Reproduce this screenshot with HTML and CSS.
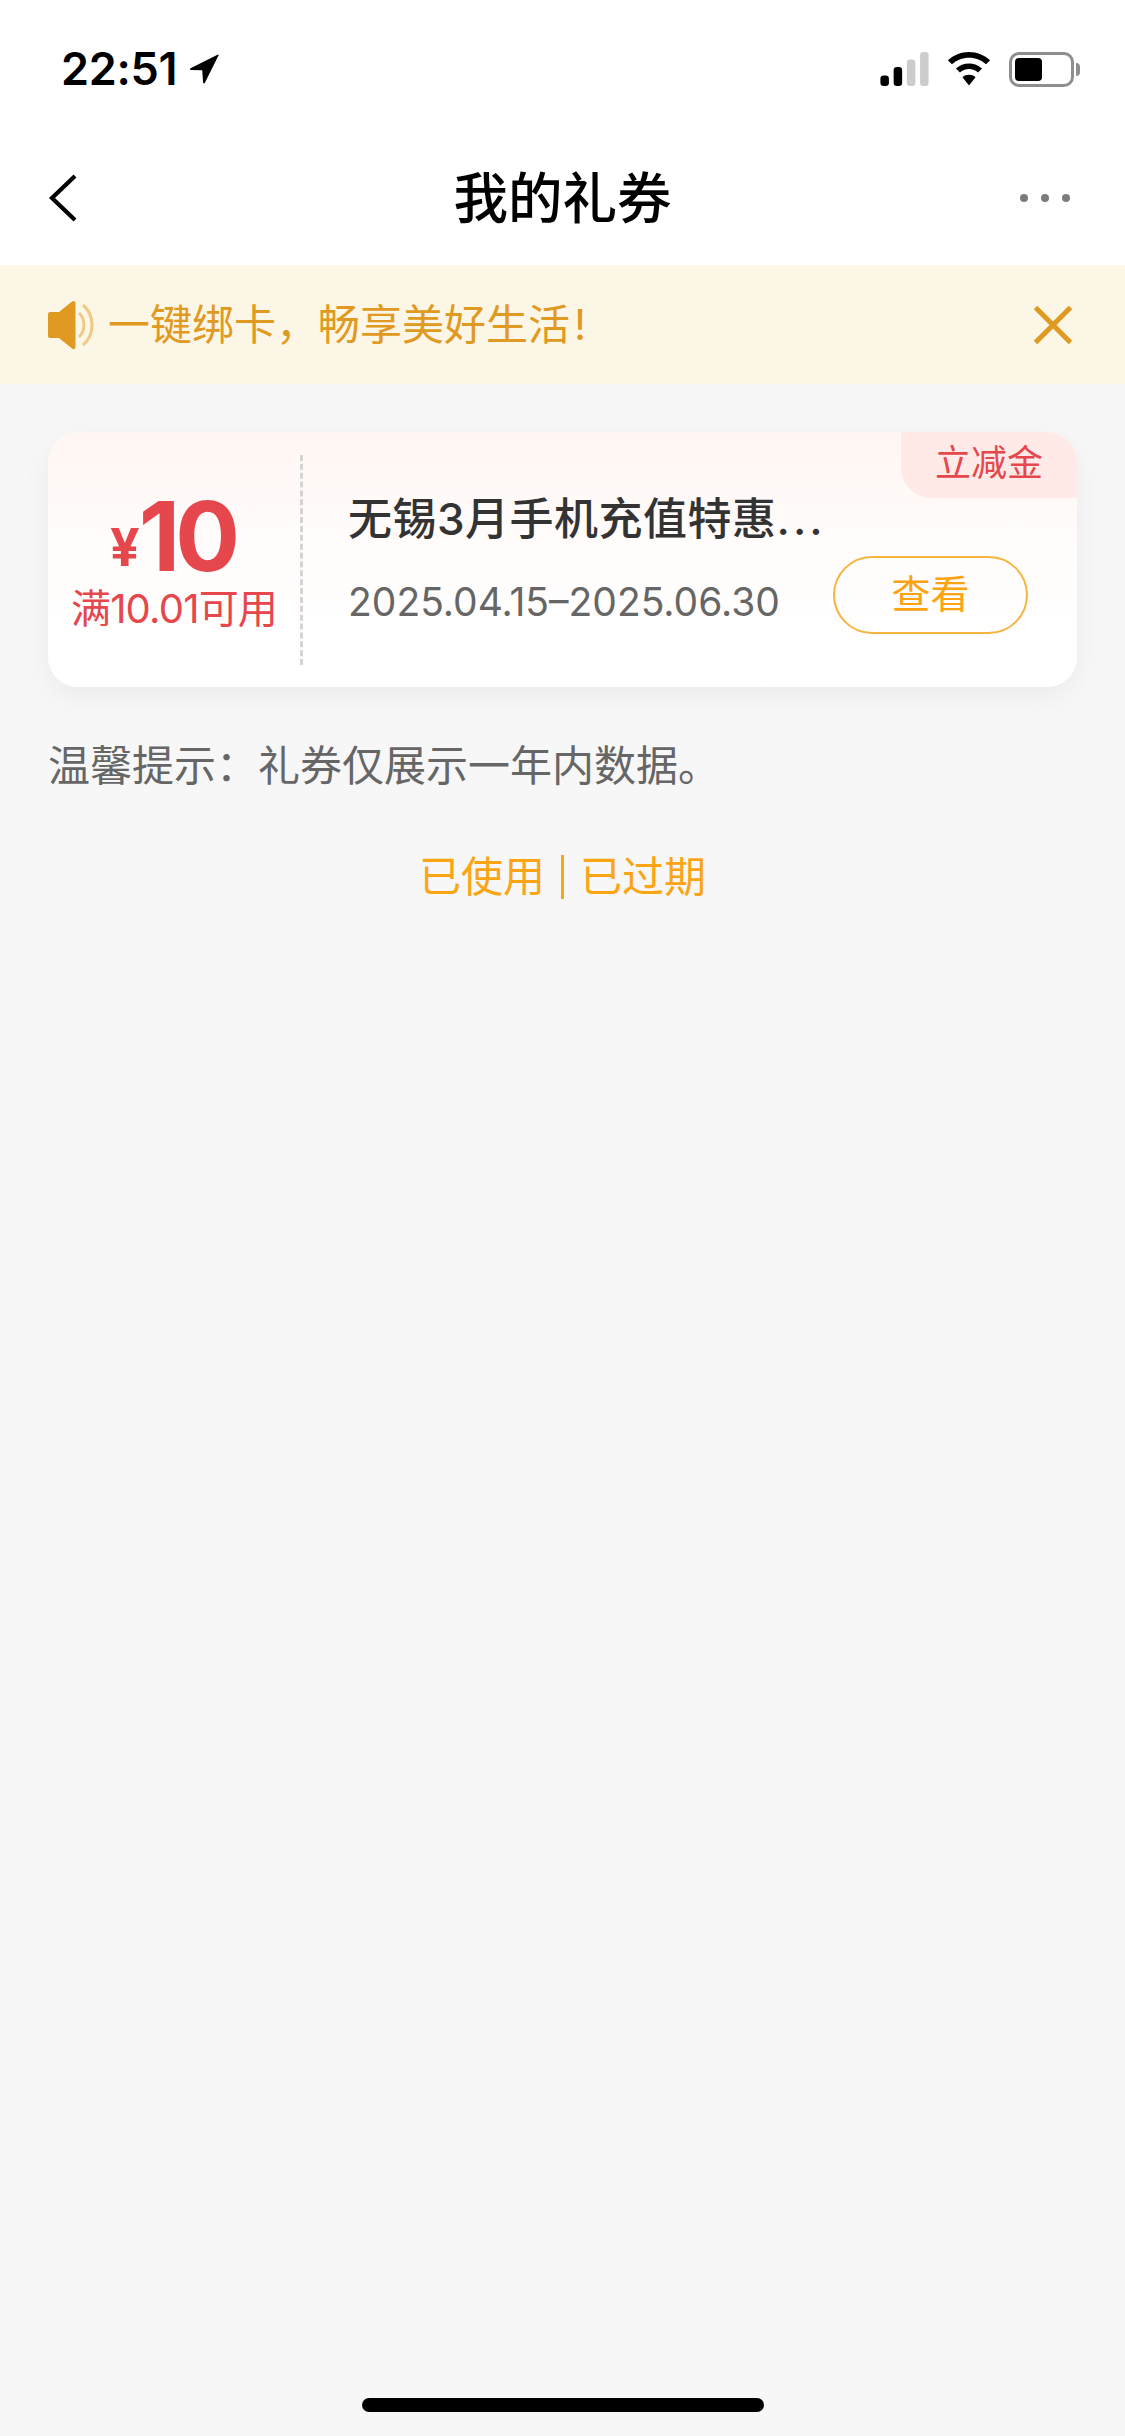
FILE: index.html
```html
<!DOCTYPE html>
<html lang="zh-CN">
<head>
<meta charset="utf-8">
<title>我的礼券</title>
<link rel="stylesheet" href="styles.css">
</head>
<body>
<div class="page">
  <header class="top">
    <div class="status">
      <div class="time-group">
        <span class="time">22:51</span>
        <svg class="loc" viewBox="0 0 30 32"><path d="M29 1.500 1.500 15.200c-.9.500-.6 1.700.4 1.700l11.300.4.900 12.200c.1 1 1.400 1.200 1.800.3L29.600 2.300c.2-.6-.1-1-.6-.8Z" fill="#000"/></svg>
      </div>
      <div class="status-icons">
        <svg class="signal" viewBox="0 0 51 36">
          <rect x="0" y="25" width="9" height="11" rx="3.500" fill="#000"/>
          <rect x="14" y="16" width="9" height="20" rx="3.500" fill="#000"/>
          <rect x="28" y="8" width="9" height="28" rx="3.500" fill="#ccc"/>
          <rect x="42" y="0" width="9" height="36" rx="3.500" fill="#ccc"/>
        </svg>
        <svg class="wifi" viewBox="0 0 46 36">
          <path d="M23 0C14.400 0 6.600 3.300.7 8.800L4.900 13C9.700 8.600 16 6 23 6s13.300 2.600 18.100 7l4.200-4.200C39.400 3.300 31.600 0 23 0Z" fill="#000"/>
          <path d="M23 12.200c-5.300 0-10.100 2-13.800 5.300l4.200 4.200c2.600-2.200 5.900-3.600 9.600-3.600s7 1.400 9.600 3.600l4.200-4.200C33.100 14.200 28.300 12.200 23 12.200Z" fill="#000"/>
          <path d="M23 24.200c-2.600 0-5 .9-6.900 2.500L23 35.500l6.900-8.800c-1.900-1.600-4.300-2.500-6.900-2.500Z" fill="#000"/>
        </svg>
        <div class="battery">
          <div class="battery-body"><div class="battery-fill"></div></div>
          <div class="battery-cap"></div>
        </div>
      </div>
    </div>
    <nav class="nav">
      <svg class="back" viewBox="0 0 30 50"><path d="M27 3 4 25l23 22" fill="none" stroke="#000" stroke-width="4.200"/></svg>
      <h1 class="title">我的礼券</h1>
      <div class="more"><i></i><i></i><i></i></div>
    </nav>
  </header>

  <div class="notice">
    <div class="notice-left">
      <svg class="speaker" viewBox="0 0 48 50">
        <path d="M0 14c0-1 .8-2 2-2h9L24 1.500c1.500-1.300 3.500-.4 3.500 1.500v44c0 2-2 2.800-3.500 1.500L11 38H2c-1.200 0-2-1-2-2Z" fill="#e09a22"/>
        <path d="M31 13c6.500 6 6.500 18 0 24" fill="none" stroke="#efca86" stroke-width="3"/>
        <path d="M35 5c12 10 12 30 0 40" fill="none" stroke="#efca86" stroke-width="3"/>
      </svg>
      <span class="notice-text">一键绑卡，畅享美好生活<span class="bang">!</span></span>
    </div>
    <svg class="close" viewBox="0 0 38 38"><path d="M1.500 1.500l35 35M36.500 1.500l-35 35" fill="none" stroke="#e09a22" stroke-width="5"/></svg>
  </div>

  <main class="content">
    <section class="card">
      <span class="tag">立减金</span>
      <div class="amount">
        <div class="price"><span class="yen">¥</span><span class="num">10</span></div>
        <div class="cond">满10.01可用</div>
      </div>
      <div class="info">
        <h2 class="name">无锡3月手机充值特惠<span class="dots">...</span></h2>
        <div class="date-row">
          <span class="date">2025.04.15–2025.06.30</span>
          <span class="btn">查看</span>
        </div>
      </div>
    </section>
    <p class="tip">温馨提示：礼券仅展示一年内数据。</p>
    <div class="links"><span>已使用</span><i class="sep"></i><span>已过期</span></div>
  </main>

  <div class="home-wrap"><div class="home"></div></div>
</div>
</body>
</html>
```
FILE: styles.css
```css
* { box-sizing: border-box; }
html, body { margin: 0; padding: 0; }
body {
  width: 1125px;
  height: 2436px;
  background: #f7f7f7;
  font-family: Inter, "Noto Sans CJK SC", sans-serif;
  overflow: hidden;
}
.page { height: 2436px; display: flex; flex-direction: column; }
.top { background: #fff; height: 265px; display: flex; flex-direction: column; }
.status {
  height: 137px;
  padding: 1px 45px 0 61px;
  display: flex;
  justify-content: space-between;
  align-items: center;
}
.time-group { display: flex; align-items: center; gap: 12px; }
.time { font-size: 45px; font-weight: 600; color: #000; line-height: 56px; letter-spacing: -0.3px; }
.loc { width: 30px; height: 32px; }
.status-icons { display: flex; align-items: center; gap: 15px; }
.signal { width: 53px; height: 34px; }
.wifi { width: 46px; height: 34px; margin-right: 2px; }
.battery { display: flex; align-items: center; gap: 2px; }
.battery-body {
  width: 65px;
  height: 35px;
  border: 3px solid #8e8e8e;
  border-radius: 10px;
  padding: 3px;
  background: #fff;
}
.battery-fill { width: 27px; height: 100%; background: #000; border-radius: 4px; }
.battery-cap { width: 4px; height: 13px; background: #8e8e8e; border-radius: 0 4px 4px 0; }
.nav {
  height: 128px;
  padding: 0 55px 6px 48px;
  display: flex;
  align-items: center;
  justify-content: space-between;
  position: relative;
  margin-bottom: -2px;
}
.back { width: 30px; height: 50px; }
.title {
  margin: 0;
  font-size: 54.5px;
  font-weight: 500;
  color: #000;
  line-height: 64px;
  position: absolute;
  left: 0;
  right: 0;
  text-align: center;
}
.more { display: flex; gap: 13px; }
.more i { width: 8px; height: 8px; border-radius: 50%; background: #7c7c7c; display: block; }
.notice {
  height: 119px;
  background: #fcf6e6;
  display: flex;
  align-items: center;
  justify-content: space-between;
  padding: 0 53px 0 48px;
}
.notice-left { display: flex; align-items: center; gap: 12px; }
.speaker { width: 48px; height: 50px; }
.notice-text { font-size: 42px; color: #e09a22; line-height: 50px; }
.bang { margin-left: 4px; }
.close { width: 38px; height: 38px; }
.content { padding: 48px 48px 0; flex: 1; }
.card {
  position: relative;
  height: 255px;
  border-radius: 30px;
  background: linear-gradient(180deg, #fff6f3 0%, #fffdfc 50%, #fff 100%);
  box-shadow: 0 10px 30px rgba(0, 0, 0, 0.05);
  display: flex;
  align-items: center;
}
.tag {
  position: absolute;
  top: 0;
  right: 0;
  width: 176px;
  height: 66px;
  background: #ffeae8;
  border-radius: 0 30px 0 30px;
  color: #e5474d;
  font-size: 36px;
  line-height: 62px;
  text-align: center;
}
.amount {
  width: 255px;
  height: 210px;
  padding-top: 36px;
  border-right: 3px dashed #d4d4d4;
  text-align: center;
  flex: none;
}
.price { color: #e5474d; line-height: 90px; height: 90px; font-weight: 700; padding-right: 3px; }
.yen { font-size: 52px; position: relative; top: -5px; margin-right: -1px; }
.num { font-size: 96px; letter-spacing: -5px; }
.cond { color: #e5474d; font-size: 40px; line-height: 46px; letter-spacing: -0.8px; margin-top: 5px; white-space: nowrap; }
.info { flex: 1; padding-left: 45px; padding-right: 49px; }
.name { margin: 0; font-size: 44px; font-weight: 500; color: #333; line-height: 56px; letter-spacing: 0.5px; white-space: nowrap; }
.dots { letter-spacing: 3px; }
.date-row { display: flex; align-items: center; justify-content: space-between; margin-top: 9px; margin-bottom: -6px; }
.date { font-size: 39px; color: #666; margin-top: 12px; white-space: nowrap; }
.btn {
  width: 195px;
  height: 78px;
  border: 2px solid #f6b53f;
  border-radius: 39px;
  color: #fca311;
  font-size: 39px;
  line-height: 72px;
  text-align: center;
  flex: none;
}
.tip { margin: 51px 0 0; font-size: 42px; line-height: 56px; color: #666; }
.links {
  margin-top: 56px;
  display: flex;
  justify-content: center;
  align-items: center;
  gap: 16px;
  color: #fba515;
  font-size: 42px;
  line-height: 54px;
}
.sep { width: 3px; height: 44px; background: #fba515; display: block; }
.home-wrap { display: flex; justify-content: center; padding-bottom: 24px; }
.home { width: 402px; height: 14px; border-radius: 7px; background: #000; }
```
